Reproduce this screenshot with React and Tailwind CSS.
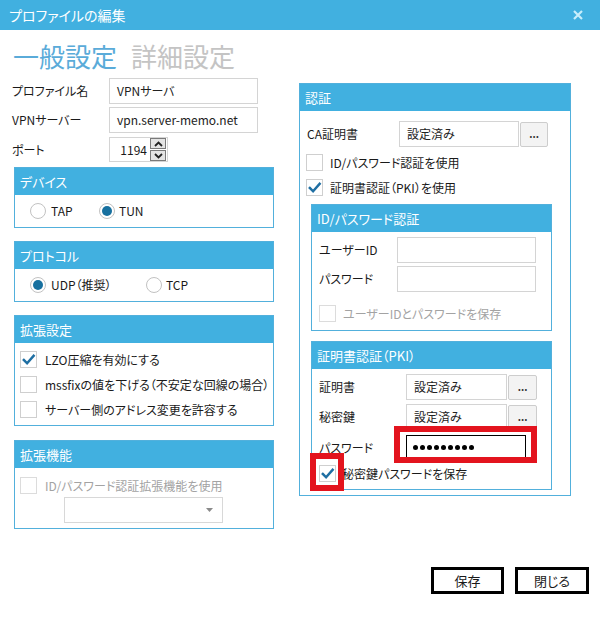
import React from "react";

const Check = () => (
  <svg width="15" height="15" viewBox="0 0 16 16">
    <polyline points="3,8.5 6.5,12 13.5,4" fill="none" stroke="#1f6fa3" strokeWidth="2.6" strokeLinecap="square" />
  </svg>
);

const CheckBox = ({ checked, disabled }) => (
  <div className={`w-[17px] h-[17px] shrink-0 border ${disabled ? "border-[#dcdcdc]" : "border-[#cfcfcf]"} bg-white flex items-center justify-center`}>
    {checked && <Check />}
  </div>
);

const Radio = ({ checked }) => (
  <div className="w-[16px] h-[16px] shrink-0 rounded-full border border-[#c2c2c2] bg-white flex items-center justify-center">
    {checked && <div className="w-[10px] h-[10px] rounded-full bg-[#17709f]" />}
  </div>
);

const Group = ({ title, children, className = "" }) => (
  <div className={`border border-[#52b0dc] bg-white ${className}`}>
    <div className="h-[27px] bg-[#41b0e0] text-white text-[13px] flex items-center pl-[5px]">{title}</div>
    {children}
  </div>
);

const Input = ({ children, className = "" }) => (
  <div className={`h-[26px] border border-[#d4d4d4] bg-white flex items-center px-[7px] text-[12px] text-[#222] ${className}`}>
    {children}
  </div>
);

const DotBtn = ({ className = "" }) => (
  <div className={`h-[25px] border border-[#cdcdcd] rounded-[2px] bg-[#f3f3f3] flex items-center justify-center text-[10px] font-bold text-[#333] ${className}`}>
    ...
  </div>
);

export default function App() {
  return (
    <div className="w-[600px] h-[628px] bg-white relative overflow-hidden font-['Noto_Sans_CJK_JP',sans-serif] [font-feature-settings:'palt'] text-[12px] leading-[16px] text-[#1a1a1a]">
      {/* Title bar */}
      <div className="h-[30px] bg-[#41b0e0] flex items-center justify-between pl-[9px] pr-[17px]">
        <span className="text-white text-[14px]">プロファイルの編集</span>
        <svg width="10" height="10" viewBox="0 0 10 10">
          <path d="M1 1 L9 9 M9 1 L1 9" stroke="#c8eefb" strokeWidth="2.2" />
        </svg>
      </div>

      {/* Heading */}
      <div className="h-[48px] pt-[4px] pl-[13px] flex items-center gap-[14px] text-[26px] leading-none">
        <span className="text-[#5aabd9]">一般設定</span>
        <span className="text-[#c4c4c4]">詳細設定</span>
      </div>

      <div className="flex h-[451px]">
        {/* Left column */}
        <div className="w-[274px] pl-[12px] flex flex-col">
          <div className="flex items-center h-[25px]">
            <span className="w-[97px]">プロファイル名</span>
            <Input className="w-[149px] h-[25px]">VPNサーバ</Input>
          </div>
          <div className="flex items-center h-[25px] mt-[4px]">
            <span className="w-[97px]">VPNサーバー</span>
            <Input className="w-[149px] h-[25px]">vpn.server-memo.net</Input>
          </div>
          <div className="flex items-center h-[25px] mt-[5px]">
            <span className="w-[97px]">ポート</span>
            <div className="w-[59px] h-[25px] border border-[#d4d4d4] flex items-center">
              <span className="flex-1 text-right pr-[3px]">1194</span>
              <div className="w-[16px] h-[23px] flex flex-col gap-[1px] mr-[1px]">
                <div className="flex-1 border border-[#7a7a7a] bg-[#e4e4e4] flex items-center justify-center">
                  <svg width="9" height="6" viewBox="0 0 9 6"><path d="M1 5 L4.5 1.5 L8 5" fill="none" stroke="#222" strokeWidth="1.8" /></svg>
                </div>
                <div className="flex-1 border border-[#7a7a7a] bg-[#e4e4e4] flex items-center justify-center">
                  <svg width="9" height="6" viewBox="0 0 9 6"><path d="M1 1 L4.5 4.5 L8 1" fill="none" stroke="#222" strokeWidth="1.8" /></svg>
                </div>
              </div>
            </div>
          </div>

          <Group title="デバイス" className="ml-[2px] w-[260px] mt-[5px]">
            <div className="h-[32px] flex items-center pl-[15px]">
              <div className="w-[69px] flex items-center gap-[5px]"><Radio /><span>TAP</span></div>
              <div className="flex items-center gap-[4px]"><Radio checked /><span>TUN</span></div>
            </div>
          </Group>

          <Group title="プロトコル" className="ml-[2px] w-[260px] mt-[13px]">
            <div className="h-[32px] flex items-center pl-[15px]">
              <div className="w-[116px] flex items-center gap-[5px]"><Radio checked /><span>UDP（推奨）</span></div>
              <div className="flex items-center gap-[4px]"><Radio /><span>TCP</span></div>
            </div>
          </Group>

          <Group title="拡張設定" className="ml-[2px] w-[260px] mt-[13px]">
            <div className="flex flex-col gap-[8px] pl-[5px] pt-[8px] pb-[7px]">
              <div className="flex items-center gap-[8px]"><CheckBox checked /><span>LZO圧縮を有効にする</span></div>
              <div className="flex items-center gap-[8px]"><CheckBox /><span>mssfixの値を下げる（不安定な回線の場合）</span></div>
              <div className="flex items-center gap-[8px]"><CheckBox /><span>サーバー側のアドレス変更を許容する</span></div>
            </div>
          </Group>

          <Group title="拡張機能" className="ml-[2px] w-[260px] mt-[14px]">
            <div className="flex flex-col pl-[5px] pt-[9px] pb-[5px]">
              <div className="flex items-center gap-[8px] text-[#a3a3a3]"><CheckBox disabled /><span>ID/パスワード認証拡張機能を使用</span></div>
              <div className="ml-[44px] mt-[3px] w-[159px] h-[26px] border border-[#d8d8d8] flex items-center justify-end pr-[9px]">
                <svg width="7" height="4" viewBox="0 0 7 4"><path d="M0 0 L7 0 L3.5 4 Z" fill="#8a8a8a" /></svg>
              </div>
            </div>
          </Group>
        </div>

        {/* Right column */}
        <div className="ml-[25px] mt-[5px] w-[272px] h-[413px] border border-[#52b0dc] flex flex-col">
          <div className="h-[27px] bg-[#41b0e0] text-white text-[13px] flex items-center pl-[5px]">認証</div>
          <div className="flex items-center mt-[10px] pl-[7px]">
            <span className="w-[92px]">CA証明書</span>
            <Input className="w-[120px]">設定済み</Input>
            <DotBtn className="w-[28px] ml-[1px]" />
          </div>
          <div className="flex items-center gap-[7px] pl-[6px] mt-[7px]"><CheckBox /><span>ID/パスワード認証を使用</span></div>
          <div className="flex items-center gap-[7px] pl-[6px] mt-[8px]"><CheckBox checked /><span>証明書認証（PKI）を使用</span></div>

          <Group title="ID/パスワード認証" className="ml-[11px] w-[241px] mt-[8px]">
            <div className="flex flex-col pl-[7px] pt-[5px] pb-[8px]">
              <div className="flex items-center">
                <span className="w-[78px]">ユーザーID</span>
                <Input className="w-[139px]" />
              </div>
              <div className="flex items-center mt-[3px]">
                <span className="w-[78px]">パスワード</span>
                <Input className="w-[139px]" />
              </div>
              <div className="flex items-center gap-[7px] mt-[13px] text-[#a3a3a3]"><CheckBox disabled /><span>ユーザーIDとパスワードを保存</span></div>
            </div>
          </Group>

          <Group title="証明書認証（PKI）" className="ml-[11px] w-[241px] mt-[10px]">
            <div className="flex flex-col pl-[7px] pt-[5px] pb-[7px]">
              <div className="flex items-center">
                <span className="w-[87px]">証明書</span>
                <Input className="w-[101px] h-[25px]">設定済み</Input>
                <DotBtn className="w-[29px] ml-[1px]" />
              </div>
              <div className="flex items-center mt-[4px]">
                <span className="w-[87px]">秘密鍵</span>
                <Input className="w-[101px] h-[25px]">設定済み</Input>
                <DotBtn className="w-[29px] ml-[1px]" />
              </div>
              <div className="flex items-center mt-[5px]">
                <span className="w-[87px]">パスワード</span>
                <div className="w-[120px] h-[25px] border border-black flex items-center pl-[6px] gap-[2px]">
                  {Array.from({ length: 9 }).map((_, i) => (
                    <div key={i} className="w-[5px] h-[5px] rounded-full bg-black" />
                  ))}
                </div>
              </div>
              <div className="flex items-center gap-[6px] mt-[5px]"><CheckBox checked /><span>秘密鍵パスワードを保存</span></div>
            </div>
          </Group>
        </div>
      </div>

      {/* Buttons */}
      <div className="flex justify-end gap-[11px] pr-[11px] mt-[38px]">
        <div className="w-[73px] h-[27px] border-[3px] border-black flex items-center justify-center text-[13px]">保存</div>
        <div className="w-[74px] h-[27px] border-[3px] border-black flex items-center justify-center text-[13px]">閉じる</div>
      </div>

      {/* Red annotation boxes */}
      <div className="absolute left-[394px] top-[426px] w-[143px] h-[37px] border-[6px] border-[#e3141e]" />
      <div className="absolute left-[310px] top-[453px] w-[34px] h-[38px] border-[6px] border-[#e3141e]" />
    </div>
  );
}
